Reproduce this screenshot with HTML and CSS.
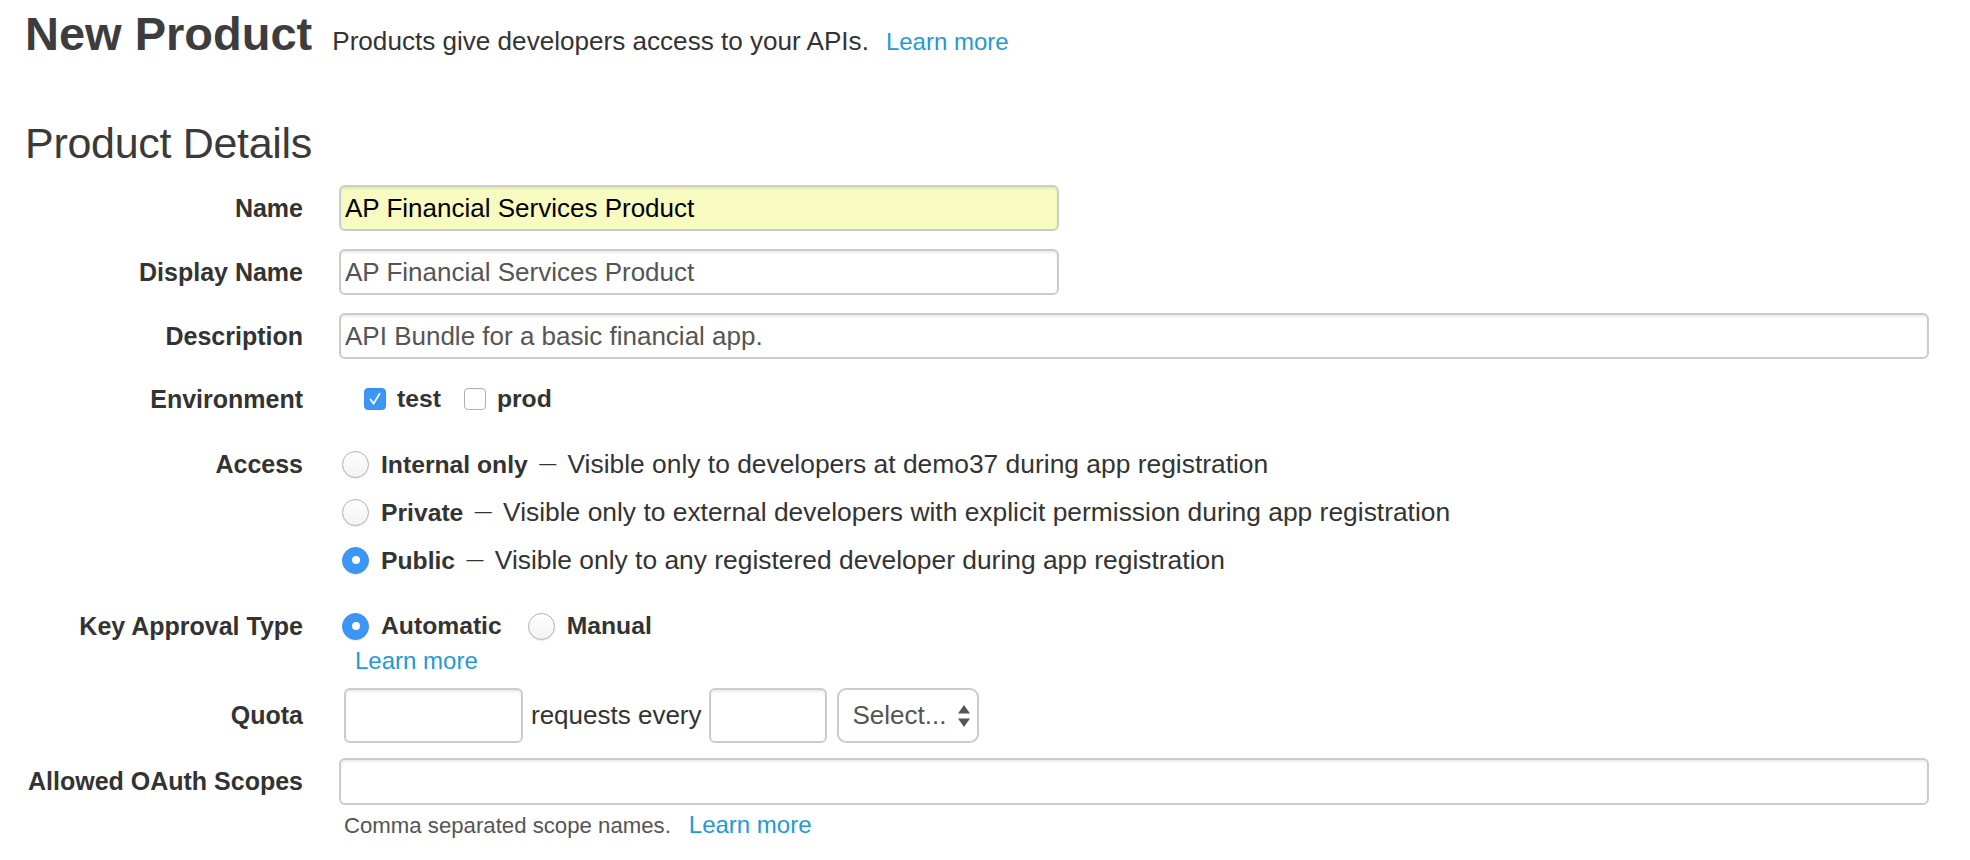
FILE: index.html
```html
<!DOCTYPE html>
<html lang="en">
<head>
<meta charset="utf-8">
<title>New Product</title>
<link rel="stylesheet" href="styles.css">
</head>
<body>
<div class="page">
  <header class="page-header">
    <h1 class="title">New Product</h1>
    <span class="subtitle">Products give developers access to your APIs.</span>
    <a class="link head-link" href="#">Learn more</a>
  </header>

  <h2 class="section">Product Details</h2>

  <form class="form">
    <div class="row r-name">
      <label class="lbl lh-46">Name</label>
      <div class="ctl"><input class="inp inp-half inp-autofill" type="text" value="AP Financial Services Product"></div>
    </div>

    <div class="row r-display">
      <label class="lbl lh-46">Display Name</label>
      <div class="ctl"><input class="inp inp-half" type="text" value="AP Financial Services Product"></div>
    </div>

    <div class="row r-desc">
      <label class="lbl lh-46">Description</label>
      <div class="ctl"><input class="inp inp-full" type="text" value="API Bundle for a basic financial app."></div>
    </div>

    <div class="row r-env">
      <label class="lbl lh-44">Environment</label>
      <div class="ctl checks">
        <span class="check is-checked">
          <svg class="tick" width="22" height="22" viewBox="0 0 22 22"><path d="M6.5 11.5 L9.6 15.6 L15.6 5.8" fill="none" stroke="#fff" stroke-width="1.8" stroke-linecap="round" stroke-linejoin="round"/></svg>
        </span>
        <span class="opt-text b">test</span>
        <span class="check check-gap"></span>
        <span class="opt-text b">prod</span>
      </div>
    </div>

    <div class="row r-access">
      <label class="lbl lh-48">Access</label>
      <div class="ctl radios">
        <div class="opt opt-48">
          <span class="radio"></span>
          <span class="opt-text"><b class="b">Internal only</b> <span class="dash">—</span> Visible only to developers at demo37 during app registration</span>
        </div>
        <div class="opt opt-48">
          <span class="radio"></span>
          <span class="opt-text"><b class="b">Private</b> <span class="dash">—</span> Visible only to external developers with explicit permission during app registration</span>
        </div>
        <div class="opt opt-48">
          <span class="radio is-checked"></span>
          <span class="opt-text"><b class="b">Public</b> <span class="dash">—</span> Visible only to any registered developer during app registration</span>
        </div>
      </div>
    </div>

    <div class="row r-key">
      <label class="lbl lh-40">Key Approval Type</label>
      <div class="ctl radios">
        <div class="opt opt-40">
          <span class="radio is-checked"></span>
          <span class="opt-text b">Automatic</span>
          <span class="radio radio-gap"></span>
          <span class="opt-text b">Manual</span>
        </div>
        <a class="link key-link" href="#">Learn more</a>
      </div>
    </div>

    <div class="row r-quota">
      <label class="lbl lh-55">Quota</label>
      <div class="ctl quota">
        <input class="inp inp-q1" type="text">
        <span class="q-text">requests every</span>
        <input class="inp inp-q2" type="text">
        <div class="select">
          <span class="select-text">Select...</span>
          <svg class="select-arrows" width="12" height="22" viewBox="0 0 12 22"><path d="M6 0 L12 8.5 L0 8.5 Z" fill="#555"/><path d="M0 13.5 L12 13.5 L6 22 Z" fill="#555"/></svg>
        </div>
      </div>
    </div>

    <div class="row r-oauth">
      <label class="lbl lh-47">Allowed OAuth Scopes</label>
      <div class="ctl">
        <input class="inp inp-full inp-47" type="text">
        <p class="help">Comma separated scope names.<a class="link help-link" href="#">Learn more</a></p>
      </div>
    </div>
  </form>
</div>
</body>
</html>
```

FILE: styles.css
```css
* { box-sizing: border-box; }

html, body {
  margin: 0;
  padding: 0;
  background: #fff;
}

body {
  font-family: "Liberation Sans", Arial, Helvetica, sans-serif;
  color: #333;
}

.page {
  padding: 11px 41px 0 25px;
}

.link {
  color: #1f9ad6;
  text-decoration: none;
  font-size: 24px;
}

/* header */
.page-header {
  display: flex;
  align-items: baseline;
}

.title {
  margin: 0;
  font-size: 47px;
  line-height: 46px;
  font-weight: bold;
  color: #3d3d3d;
}

.subtitle {
  margin-left: 20px;
  font-size: 26.1px;
  color: #333;
}

.head-link {
  margin-left: 17px;
}

.section {
  margin: 65px 0 0 0;
  font-size: 43px;
  line-height: 42px;
  font-weight: normal;
  color: #3a3a3a;
  letter-spacing: -0.3px;
}

/* form grid */
.form {
  margin-top: 21px;
}

.row {
  display: grid;
  grid-template-columns: 278px 1fr;
  column-gap: 36px;
  align-items: start;
}

.r-display, .r-desc, .r-env { margin-top: 18px; }
.r-access { margin-top: 19px; }
.r-key { margin-top: 22px; }
.r-quota { margin-top: 12px; }
.r-oauth { margin-top: 15px; }

.lbl {
  text-align: right;
  font-size: 25px;
  font-weight: bold;
  color: #333;
  white-space: nowrap;
}

.lh-40 { line-height: 40px; }
.lh-44 { line-height: 44px; }
.lh-46 { line-height: 46px; }
.lh-47 { line-height: 47px; }
.lh-48 { line-height: 48px; }
.lh-55 { line-height: 55px; }

.ctl {
  min-width: 0;
}

/* inputs */
.inp {
  display: block;
  height: 46px;
  border: 2px solid #cccccc;
  border-radius: 6px;
  padding: 0 4px;
  font-family: "Liberation Sans", Arial, Helvetica, sans-serif;
  font-size: 26px;
  color: #555;
  background: #fff;
  box-shadow: inset 0 2px 2px rgba(0, 0, 0, 0.075);
  outline: none;
}

.inp-half { width: 720px; }
.inp-full { width: 100%; }
.inp-47 { height: 47px; }

.inp-autofill {
  background: #f8fbbf;
  color: #000;
}

/* checkboxes */
.checks {
  display: flex;
  align-items: center;
  height: 44px;
  padding-left: 25px;
}

.check {
  flex: none;
  width: 22px;
  height: 22px;
  border: 1px solid #b0b0b0;
  border-radius: 4px;
  background: #fff;
  box-shadow: inset 0 1px 1px rgba(0, 0, 0, 0.04);
  position: relative;
}

.check.is-checked {
  background: #3b96f6;
  border-color: #3b8ff0;
}

.check .tick {
  position: absolute;
  left: -1px;
  top: -1px;
}

.check-gap { margin-left: 23px; }

.opt-text {
  margin-left: 11px;
  font-size: 26.4px;
  color: #333;
  white-space: nowrap;
}

.b {
  font-size: 24.7px;
  font-weight: bold;
  color: #333;
}

.dash {
  display: inline-block;
  font-size: 17px;
  margin: 0 4px;
  vertical-align: 4px;
}

/* radios */
.radios {
  padding-left: 3px;
}

.opt {
  display: flex;
  align-items: center;
}

.opt-48 { height: 48px; }
.opt-40 { height: 40px; }

.opt .opt-text { margin-left: 12px; }

.radio {
  flex: none;
  width: 27px;
  height: 27px;
  border-radius: 50%;
  border: 1px solid #b0b0b0;
  background: linear-gradient(#ffffff, #f3f3f3);
  box-shadow: 0 1px 1px rgba(0, 0, 0, 0.08);
  position: relative;
}

.radio.is-checked {
  background: #3b96f6;
  border-color: #3a90f0;
}

.radio.is-checked::after {
  content: "";
  position: absolute;
  left: 50%;
  top: 50%;
  width: 8px;
  height: 8px;
  margin: -4px 0 0 -4px;
  border-radius: 50%;
  background: #fff;
}

.radio-gap { margin-left: 26px; }

.key-link {
  display: block;
  padding-left: 13px;
  line-height: 30px;
}

/* quota */
.quota {
  display: flex;
  align-items: center;
  height: 55px;
  padding-left: 5px;
}

.quota .inp { height: 55px; }
.inp-q1 { width: 179px; }
.inp-q2 { width: 118px; }

.q-text {
  margin: 0 7px 0 8px;
  font-size: 26px;
  color: #333;
  white-space: nowrap;
}

.select {
  margin-left: 10px;
  width: 142px;
  height: 55px;
  border: 2px solid #cccccc;
  border-radius: 9px;
  background: #fff;
  display: flex;
  align-items: center;
  justify-content: space-between;
  padding: 0 7px 0 14px;
}

.select-text {
  font-size: 26px;
  color: #555;
}

.select-arrows { flex: none; margin-top: 1px; }

/* help */
.help {
  margin: 6px 0 0 0;
  padding-left: 5px;
  font-size: 22.2px;
  line-height: 28px;
  color: #555;
}

.help-link {
  margin-left: 18px;
}
```
